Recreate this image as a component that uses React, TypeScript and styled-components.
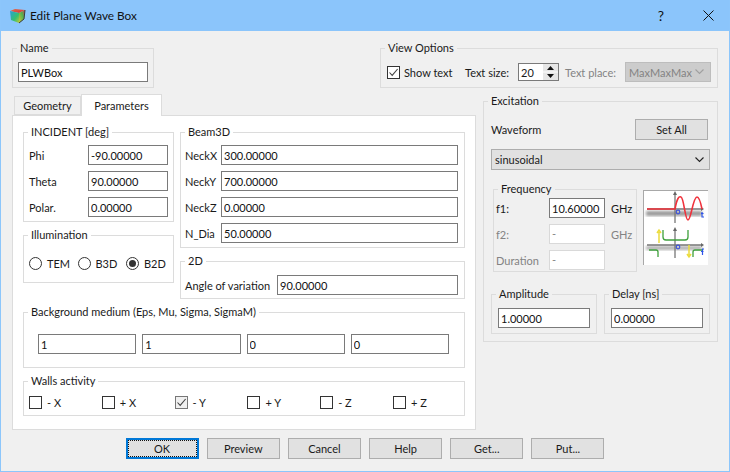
import React from 'react';
import styled, {createGlobalStyle} from 'styled-components';

const GlobalStyle = createGlobalStyle`
    html, body {
        margin: 0;
        padding: 0;
        background: #f0f0f0;
    }
    body {
        font-family: Lato, "Open Sans", sans-serif;
        font-size: 11px;
        color: #1a1a1a;
    }
`

const AppIcon = () => (
    <svg width="17" height="16" viewBox="0 0 17 16">
        <defs>
            <linearGradient id="faceTop" x1="0" y1="0" x2="1" y2="1">
                <stop offset="0" stopColor="#e0704a"/>
                <stop offset="1" stopColor="#d8303a"/>
            </linearGradient>
            <linearGradient id="faceLeft" x1="0" y1="0" x2="1" y2="1">
                <stop offset="0" stopColor="#28a0d8"/>
                <stop offset="0.6" stopColor="#35c070"/>
                <stop offset="1" stopColor="#b8c83a"/>
            </linearGradient>
            <linearGradient id="faceRight" x1="0" y1="1" x2="1" y2="0">
                <stop offset="0" stopColor="#d0c838"/>
                <stop offset="0.6" stopColor="#50b050"/>
                <stop offset="1" stopColor="#d83a48"/>
            </linearGradient>
        </defs>
        <polygon points="1,3 6,1 16,2 10,5" fill="url(#faceTop)"/>
        <polygon points="1,3 10,5 10,15 2,12" fill="url(#faceLeft)"/>
        <polygon points="10,5 16,2 15,11 10,15" fill="url(#faceRight)"/>
        <path d="M16 2 L15 11 L10 15" fill="none" stroke="#3a3a3a" strokeWidth="1"/>
    </svg>
);

const CheckMark = () => (
    <svg width="11" height="11" viewBox="0 0 11 11">
        <path d="M1.5 5.5 L4.2 8.4 L9.6 2" fill="none" stroke="#444" strokeWidth="1.1"/>
    </svg>
);

const SpinArrows = () => (
    <svg width="15" height="16" viewBox="0 0 15 16">
        <rect x="0" y="0" width="15" height="7.5" fill="#e6e6e6"/>
        <rect x="0" y="8.5" width="15" height="7.5" fill="#e6e6e6"/>
        <polygon points="7.5,2 4,6 11,6" fill="#111"/>
        <polygon points="4,10 11,10 7.5,14" fill="#111"/>
    </svg>
);

const Chevron = ({color}: {color: string}) => (
    <svg width="9" height="6" viewBox="0 0 9 6">
        <path d="M0.5 0.5 L4.5 4.5 L8.5 0.5" fill="none" stroke={color} strokeWidth="1.1"/>
    </svg>
);

const WavePicture = () => (
    <svg width="65" height="75" viewBox="0 0 65 75">
        <defs>
            <filter id="soft"><feGaussianBlur stdDeviation="1.4"/></filter>
            <filter id="tiny"><feGaussianBlur stdDeviation="0.3"/></filter>
        </defs>
        <rect x="3" y="21" width="56" height="5" fill="#9a9a9a" filter="url(#soft)"/>
        <rect x="3" y="56" width="56" height="4" fill="#b0b0b0" filter="url(#soft)"/>
        <g filter="url(#tiny)">
            <path d="M4 19 H58 M32 33 V3" stroke="#777" strokeWidth="1.3" fill="none"/>
            <path d="M58 17 L61 19 L58 21 Z M30 5 L32 1 L34 5 Z" fill="#666"/>
            <path d="M4 55 H58 M32 68 V39" stroke="#777" strokeWidth="1.3" fill="none"/>
            <path d="M58 53 L61 55 L58 57 Z M30 41 L32 37 L34 41 Z" fill="#666"/>
            <path d="M4 19 H32 C34 8 36 6 38 7 C41 8 42 30 45 30 C48 30 50 7 54 7 C56 7 58 14 59 19" stroke="#f0303a" strokeWidth="1.6" fill="none"/>
            <path d="M6 60 H13 Q15 60 15 62 V67" stroke="#3fa03c" strokeWidth="1.3" fill="none"/>
            <path d="M20 40 V47 Q20 50 23 50 H42 Q45 50 45 47 V40" stroke="#3fa03c" strokeWidth="1.3" fill="none"/>
            <path d="M50 67 V62 Q50 60 52 60 H60" stroke="#3fa03c" strokeWidth="1.3" fill="none"/>
            <path d="M16 53 V42 M14 43 L16 40 L18 43" stroke="#ecdc3c" strokeWidth="1.5" fill="none"/>
            <path d="M46 55 V65 M44 64 L46 67 L48 64" stroke="#ecdc3c" strokeWidth="1.5" fill="none"/>
            <circle cx="35" cy="22" r="1.8" stroke="#3f55d8" strokeWidth="1.2" fill="none"/>
            <circle cx="35" cy="57" r="1.8" stroke="#3f55d8" strokeWidth="1.2" fill="none"/>
            <path d="M59 22 V27 H61 M58 23.5 H60.5" stroke="#2f55e8" strokeWidth="1.2" fill="none"/>
            <path d="M61 59 H59.5 V65 M58 61.5 H60.5" stroke="#2f55e8" strokeWidth="1.2" fill="none"/>
        </g>
    </svg>
);

const boxes = ['- X', '+ X', '- Y', '+ Y', '- Z', '+ Z'];

export default function App() {
    return (
        <Window>
            <GlobalStyle/>
            <TitleBar>
                <AppIcon/>
                <Title>Edit Plane Wave Box</Title>
                <Help>?</Help>
                <Close>
                    <svg width="11" height="11" viewBox="0 0 11 11">
                        <path d="M0.5 0.5 L10.5 10.5 M10.5 0.5 L0.5 10.5" stroke="#111" strokeWidth="1"/>
                    </svg>
                </Close>
            </TitleBar>
            <Content>
                <TopRow>
                    <NameGroup>
                        <Caption>Name</Caption>
                        <Field $width="130px" value="PLWBox" readOnly/>
                    </NameGroup>
                    <ViewGroup>
                        <Caption>View Options</Caption>
                        <ViewRow>
                            <CheckLabel><Check><CheckMark/></Check>Show text</CheckLabel>
                            <SizeLabel>Text size:</SizeLabel>
                            <Spin>
                                <SpinValue>20</SpinValue>
                                <SpinButtons><SpinArrows/></SpinButtons>
                            </Spin>
                            <PlaceLabel>Text place:</PlaceLabel>
                            <DisabledSelect>MaxMaxMax<Chevron color="#a0a0a0"/></DisabledSelect>
                        </ViewRow>
                    </ViewGroup>
                </TopRow>
                <MiddleRow>
                    <TabsColumn>
                        <TabStrip>
                            <Tab>Geometry</Tab>
                            <Tab $active>Parameters</Tab>
                        </TabStrip>
                        <Pane>
                            <PaneColumns>
                                <LeftColumn>
                                    <IncidentGroup>
                                        <Caption>INCIDENT [deg]</Caption>
                                        <FieldRow><RowLabel $width="59px">Phi</RowLabel><Field $width="80px" value="-90.00000" readOnly/></FieldRow>
                                        <FieldRow><RowLabel $width="59px">Theta</RowLabel><Field $width="80px" value="90.00000" readOnly/></FieldRow>
                                        <FieldRow><RowLabel $width="59px">Polar.</RowLabel><Field $width="80px" value="0.00000" readOnly/></FieldRow>
                                    </IncidentGroup>
                                    <IlluminationGroup>
                                        <Caption>Illumination</Caption>
                                        <RadioRow>
                                            <RadioLabel><Radio/>TEM</RadioLabel>
                                            <RadioLabel><Radio/>B3D</RadioLabel>
                                            <RadioLabel><Radio $on/>B2D</RadioLabel>
                                        </RadioRow>
                                    </IlluminationGroup>
                                </LeftColumn>
                                <RightColumn>
                                    <BeamGroup>
                                        <Caption>Beam3D</Caption>
                                        <FieldRow><RowLabel $width="36px">NeckX</RowLabel><Field $width="237px" value="300.00000" readOnly/></FieldRow>
                                        <FieldRow><RowLabel $width="36px">NeckY</RowLabel><Field $width="237px" value="700.00000" readOnly/></FieldRow>
                                        <FieldRow><RowLabel $width="36px">NeckZ</RowLabel><Field $width="237px" value="0.00000" readOnly/></FieldRow>
                                        <FieldRow><RowLabel $width="36px">N_Dia</RowLabel><Field $width="237px" value="50.00000" readOnly/></FieldRow>
                                    </BeamGroup>
                                    <AngleGroup>
                                        <Caption>2D</Caption>
                                        <FieldRow><RowLabel $width="92px">Angle of variation</RowLabel><Field $width="181px" value="90.00000" readOnly/></FieldRow>
                                    </AngleGroup>
                                </RightColumn>
                            </PaneColumns>
                            <MediumGroup>
                                <Caption>Background medium (Eps, Mu, Sigma, SigmaM)</Caption>
                                <MediumGrid>
                                    <Field value="1" readOnly/>
                                    <Field value="1" readOnly/>
                                    <Field value="0" readOnly/>
                                    <Field value="0" readOnly/>
                                </MediumGrid>
                            </MediumGroup>
                            <WallsGroup>
                                <Caption>Walls activity</Caption>
                                <WallsRow>
                                    {boxes.map((b) => (
                                        <WallLabel key={b}>
                                            <Check $soft={b === '- Y'}>{b === '- Y' && <CheckMark/>}</Check>{b}
                                        </WallLabel>
                                    ))}
                                </WallsRow>
                            </WallsGroup>
                        </Pane>
                    </TabsColumn>
                    <ExcitationGroup>
                        <Caption>Excitation</Caption>
                        <WaveformRow>
                            <span>Waveform</span>
                            <SetAll>Set All</SetAll>
                        </WaveformRow>
                        <WaveSelect>sinusoidal<Chevron color="#222"/></WaveSelect>
                        <FrequencyRow>
                            <FrequencyGroup>
                                <Caption>Frequency</Caption>
                                <FreqRow><FreqLabel>f1:</FreqLabel><Field $width="56px" value="10.60000" readOnly/><Unit>GHz</Unit></FreqRow>
                                <FreqRow $off><FreqLabel>f2:</FreqLabel><OffField>-</OffField><Unit>GHz</Unit></FreqRow>
                                <FreqRow $off><FreqLabel>Duration</FreqLabel><OffField>-</OffField></FreqRow>
                            </FrequencyGroup>
                            <Picture><WavePicture/></Picture>
                        </FrequencyRow>
                        <AmpRow>
                            <AmpGroup>
                                <Caption>Amplitude</Caption>
                                <Field value="1.00000" readOnly/>
                            </AmpGroup>
                            <AmpGroup>
                                <Caption>Delay [ns]</Caption>
                                <Field value="0.00000" readOnly/>
                            </AmpGroup>
                        </AmpRow>
                    </ExcitationGroup>
                </MiddleRow>
                <Footer>
                    <FootButton $main>OK</FootButton>
                    <FootButton>Preview</FootButton>
                    <FootButton>Cancel</FootButton>
                    <FootButton>Help</FootButton>
                    <FootButton>Get...</FootButton>
                    <FootButton>Put...</FootButton>
                </Footer>
            </Content>
        </Window>
    );
}

const Window = styled.div`
    width: 730px;
    height: 472px;
    box-sizing: border-box;
    background: #f0f0f0;
    border: 1px solid #8cc6fb;
    border-top: 0;
    display: flex;
    flex-direction: column;
    overflow: hidden;
    white-space: nowrap;
`

const TitleBar = styled.div`
    height: 31px;
    flex: none;
    margin: 0 -1px;
    background: #8bc5fb;
    display: flex;
    align-items: center;
    padding-left: 9px;
`

const Title = styled.span`
    margin-left: 4px;
    font-size: 11.8px;
    color: #111;
`

const Help = styled.span`
    margin-left: auto;
    margin-right: 39px;
    font-size: 14px;
    color: #111;
`

const Close = styled.span`
    display: flex;
    margin-right: 16px;
`

const Content = styled.div`
    flex: 1;
    padding: 10px 11px 0;
    display: flex;
    flex-direction: column;
`

const Group = styled.fieldset`
    --pad: 5px;
    margin: 0;
    border: 1px solid #dcdcdc;
    box-sizing: border-box;
    min-width: 0;
    padding: 6px 5px 4px var(--pad);
`

const Caption = styled.legend`
    padding: 0 3px;
    margin-left: calc(4px - var(--pad));
    line-height: 14px;
    font-size: 11px;
    color: #1a1a1a;
`

const Field = styled.input<{$width?: string}>`
    box-sizing: border-box;
    display: block;
    width: ${(p) => p.$width || '100%'};
    height: 20px;
    margin: 0;
    padding: 0 2px;
    border: 1px solid #7a7a7a;
    outline: none;
    background: #fff;
    font: 11px Lato, "Open Sans", sans-serif;
    color: #111;
`

const TopRow = styled.div`
    display: flex;
    justify-content: space-between;
`

const NameGroup = styled(Group)`
    width: 142px;
    padding: 7px 5px 5px var(--pad);
`

const ViewGroup = styled(Group)`
    --pad: 6px;
    width: 338px;
    padding: 7px 5px 5px var(--pad);
`

const ViewRow = styled.div`
    display: flex;
    align-items: center;
    height: 20px;
`

const CheckLabel = styled.label`
    display: flex;
    align-items: center;
    gap: 4px;
    width: 78px;
    flex: none;
`

const Check = styled.span<{$soft?: boolean}>`
    box-sizing: border-box;
    width: 13px;
    height: 13px;
    flex: none;
    border: 1px solid ${(p) => (p.$soft ? '#777' : '#333')};
    background: ${(p) => (p.$soft ? '#f0f0f0' : '#fff')};
    display: flex;
    align-items: center;
    justify-content: center;
`

const SizeLabel = styled.span`
    width: 53px;
    flex: none;
`

const Spin = styled.div`
    box-sizing: border-box;
    width: 41px;
    height: 18px;
    flex: none;
    border: 1px solid #7a7a7a;
    background: #fff;
    display: flex;
    align-items: center;
    justify-content: space-between;
`

const SpinValue = styled.span`
    padding-left: 2px;
`

const SpinButtons = styled.span`
    display: flex;
    width: 15px;
    height: 16px;
`

const PlaceLabel = styled.span`
    margin-left: 6px;
    width: 60px;
    flex: none;
    color: #838383;
`

const DisabledSelect = styled.div`
    box-sizing: border-box;
    width: 86px;
    height: 20px;
    flex: none;
    padding: 0 6px 0 3px;
    background: #cccccc;
    border: 1px solid #bdbdbd;
    color: #838383;
    display: flex;
    align-items: center;
    justify-content: space-between;
`

const MiddleRow = styled.div`
    display: flex;
    justify-content: space-between;
    align-items: flex-start;
    margin-top: 6px;
`

const TabsColumn = styled.div`
    width: 464px;
    padding-top: 1px;
`

const TabStrip = styled.div`
    display: flex;
    align-items: flex-end;
    padding-left: 2px;
    height: 20px;
    position: relative;
    z-index: 1;
`

const Tab = styled.div<{$active?: boolean}>`
    box-sizing: border-box;
    height: ${(p) => (p.$active ? '22px' : '19px')};
    width: ${(p) => (p.$active ? '81px' : '67px')};
    margin-bottom: ${(p) => (p.$active ? '-1px' : '0')};
    border: 1px solid #dcdcdc;
    border-bottom: ${(p) => (p.$active ? '0' : '1px solid #dcdcdc')};
    background: ${(p) => (p.$active ? '#fff' : '#f0f0f0')};
    display: flex;
    align-items: center;
    justify-content: center;
`

const Pane = styled.div`
    box-sizing: border-box;
    height: 315px;
    border: 1px solid #dcdcdc;
    background: #fff;
    padding: 9px 10px 0;
    display: flex;
    flex-direction: column;
    gap: 6px;
`

const PaneColumns = styled.div`
    display: flex;
    gap: 6px;
`

const LeftColumn = styled.div`
    width: 151px;
    display: flex;
    flex-direction: column;
    gap: 6px;
`

const RightColumn = styled.div`
    width: 285px;
    display: flex;
    flex-direction: column;
    gap: 6px;
`

const IncidentGroup = styled(Group)``

const FieldRow = styled.div`
    display: flex;
    align-items: center;
    & + & {
        margin-top: 6px;
    }
`

const RowLabel = styled.span<{$width: string}>`
    width: ${(p) => p.$width};
    flex: none;
`

const IlluminationGroup = styled(Group)`
    height: 55px;
    padding: 11px 0 0 var(--pad);
`

const RadioRow = styled.div`
    display: flex;
    height: 20px;
    align-items: center;
`

const RadioLabel = styled.label`
    display: flex;
    align-items: center;
    gap: 5px;
    width: 48.5px;
    flex: none;
`

const Radio = styled.span<{$on?: boolean}>`
    box-sizing: border-box;
    width: 13px;
    height: 13px;
    flex: none;
    border-radius: 50%;
    border: 1px solid #333;
    background: #fff;
    display: flex;
    align-items: center;
    justify-content: center;
    &::after {
        content: "";
        width: 7px;
        height: 7px;
        border-radius: 50%;
        background: ${(p) => (p.$on ? '#333' : 'transparent')};
    }
`

const BeamGroup = styled(Group)`
    --pad: 4px;
`

const AngleGroup = styled(Group)`
    --pad: 4px;
    padding-top: 7px;
    padding-bottom: 3px;
`

const MediumGroup = styled(Group)`
    --pad: 14px;
    height: 63px;
    padding: 15px 15px 0 var(--pad);
`

const MediumGrid = styled.div`
    display: grid;
    grid-template-columns: repeat(4, 1fr);
    gap: 6px;
`

const WallsGroup = styled(Group)`
    height: 42px;
    padding: 4px 0 0 var(--pad);
`

const WallsRow = styled.div`
    display: flex;
    height: 20px;
    align-items: center;
`

const WallLabel = styled.label`
    display: flex;
    align-items: center;
    gap: 5px;
    width: 72.8px;
    flex: none;
`

const ExcitationGroup = styled(Group)`
    --pad: 7px;
    width: 235px;
    height: 248px;
    padding: 11px 7px 0 var(--pad);
`

const WaveformRow = styled.div`
    display: flex;
    align-items: center;
    justify-content: space-between;
    padding-right: 2px;
    height: 21px;
`

const SetAll = styled.div`
    box-sizing: border-box;
    width: 73px;
    height: 21px;
    background: #e1e1e1;
    border: 1px solid #adadad;
    display: flex;
    align-items: center;
    justify-content: center;
`

const WaveSelect = styled.div`
    box-sizing: border-box;
    height: 21px;
    margin-top: 9px;
    padding: 0 5px 0 3px;
    background: #e1e1e1;
    border: 1px solid #adadad;
    display: flex;
    align-items: center;
    justify-content: space-between;
`

const FrequencyRow = styled.div`
    display: flex;
    align-items: flex-start;
    margin-top: 12px;
    padding-left: 2px;
    gap: 6px;
`

const FrequencyGroup = styled(Group)`
    --pad: 2px;
    width: 144px;
    height: 90px;
    padding: 2px 0 0 var(--pad);
`

const FreqRow = styled.div<{$off?: boolean}>`
    display: flex;
    align-items: center;
    height: 20px;
    color: ${(p) => (p.$off ? '#838383' : 'inherit')};
    & + & {
        margin-top: 6px;
    }
`

const FreqLabel = styled.span`
    width: 53px;
    flex: none;
`

const OffField = styled.div`
    box-sizing: border-box;
    width: 56px;
    height: 20px;
    border: 1px solid #d9d9d9;
    background: #fff;
    padding-left: 2px;
    line-height: 18px;
`

const Unit = styled.span`
    margin-left: 6px;
`

const Picture = styled.div`
    width: 65px;
    height: 75px;
    margin-top: 8px;
    background: #fff;
    box-shadow: inset 1px 1px 0 #a8a8a8;
`

const AmpRow = styled.div`
    display: flex;
    justify-content: space-between;
    margin-top: 15px;
`

const AmpGroup = styled(Group)`
    --pad: 6px;
    width: 106px;
    height: 47px;
    padding: 7px 6px 0 var(--pad);
`

const Footer = styled.div`
    display: flex;
    justify-content: center;
    gap: 8.2px;
    margin-top: 8px;
`

const FootButton = styled.div<{$main?: boolean}>`
    box-sizing: border-box;
    width: 73px;
    height: 21px;
    background: #e1e1e1;
    border: ${(p) => (p.$main ? '2px solid #0078d7' : '1px solid #adadad')};
    outline: ${(p) => (p.$main ? '1px dotted #111' : 'none')};
    outline-offset: -3px;
    display: flex;
    align-items: center;
    justify-content: center;
`
